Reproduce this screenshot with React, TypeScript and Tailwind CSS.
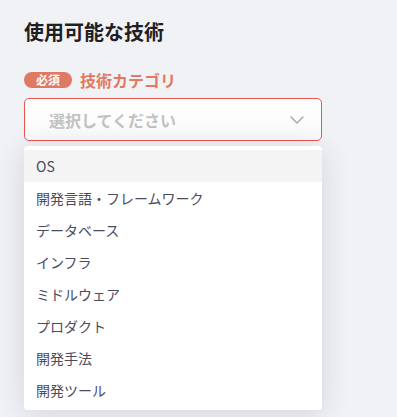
import React from 'react';

const options = ['OS', '開発言語・フレームワーク', 'データベース', 'インフラ', 'ミドルウェア', 'プロダクト', '開発手法', '開発ツール'];

export default function App() {
  return (
    <div
      className="w-[397px] h-[417px] overflow-hidden bg-[#f1f2f6] px-6 pt-[18px]"
      style={{ fontFamily: '"Noto Sans CJK JP", "Noto Sans", sans-serif' }}
    >
      <h2 className="text-[20px] font-bold leading-[28px] text-[#1f1f24]">使用可能な技術</h2>

      <div className="mt-[23px] flex items-center gap-2">
        <span className="h-[16px] w-[48px] rounded-full bg-[#de7a62] text-white text-[12px] font-bold leading-[16px] text-center">必須</span>
        <span className="text-[16px] font-bold leading-[22px] text-[#e07a62]">技術カテゴリ</span>
      </div>

      <div className="relative mt-[7px] w-[298px]">
        <button className="flex h-[43px] w-full items-center justify-between rounded-[5px] border border-[#ef5350] bg-gradient-to-b from-white to-[#fafafa] pl-6 pr-4">
          <span className="text-[16px] font-bold text-[#c2c2c2]">選択してください</span>
          <svg width="14" height="8" viewBox="0 0 14 8" fill="none" className="mr-[1px]">
            <path d="M1 1l6 6 6-6" stroke="#a9a9ae" strokeWidth="1.5" strokeLinecap="round" strokeLinejoin="round" />
          </svg>
        </button>

        {/* fields hidden behind the open menu */}
        <div className="mt-[77px] h-[42px] w-full rounded-[4px] border border-[#d4d5da] bg-white" />
        <div className="mt-[75px] h-[42px] w-full rounded-[4px] border border-[#d4d5da] bg-white" />

        <ul className="absolute left-0 top-[48px] z-10 w-full rounded-[4px] bg-white py-1 shadow-[0_4px_30px_rgba(30,35,60,0.14)]">
          {options.map((o, i) => (
            <li
              key={o}
              className={`h-8 px-3 text-[14px] leading-8 text-[#4a4b5c] ${i === 0 ? 'bg-[#f4f4f5]' : ''}`}
            >
              {o}
            </li>
          ))}
        </ul>
      </div>
    </div>
  );
}
